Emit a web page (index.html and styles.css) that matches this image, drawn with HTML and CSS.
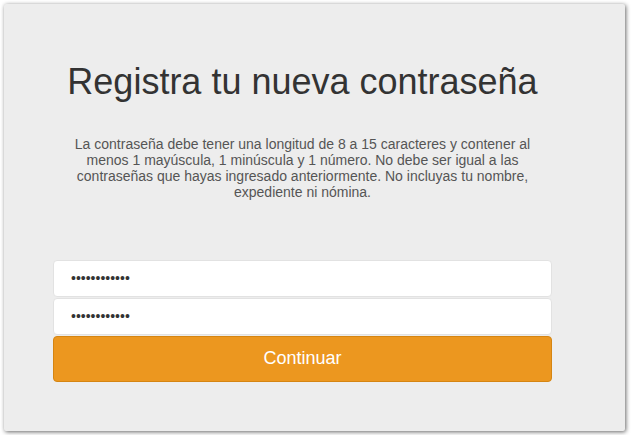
FILE: index.html
```html
<!DOCTYPE html>
<html lang="es">
<head>
<meta charset="utf-8">
<title>Registra tu nueva contraseña</title>
<link rel="stylesheet" href="styles.css">
</head>
<body>
<div class="card">
  <div class="content">
    <h1 class="title">Registra tu nueva contraseña</h1>
    <p class="info">La contraseña debe tener una longitud de 8 a 15 caracteres y contener al menos 1 mayúscula, 1 minúscula y 1 número. No debe ser igual a las contraseñas que hayas ingresado anteriormente. No incluyas tu nombre, expediente ni nómina.</p>
    <form class="form">
      <input class="field" type="password" value="Contrasena12">
      <input class="field" type="password" value="Contrasena12">
      <button class="btn" type="button">Continuar</button>
    </form>
  </div>
</div>
</body>
</html>
```
FILE: styles.css
```css
html, body {
  margin: 0;
  padding: 0;
  background: #ffffff;
}
body {
  padding: 4px;
  font-family: "Liberation Sans", Arial, sans-serif;
}
.card {
  width: 621px;
  height: 427px;
  box-sizing: border-box;
  background: #ededed;
  border-radius: 2px;
  box-shadow: 1px 1px 4px rgba(0, 0, 0, 0.6);
  padding: 58px 0 0 49px;
}
.content {
  width: 499px;
  display: flex;
  flex-direction: column;
  align-items: center;
}
.title {
  margin: 0;
  font-size: 36px;
  font-weight: 400;
  line-height: 1.1;
  color: #333333;
  text-align: center;
}
.info {
  margin: 34px 0 0;
  width: 470px;
  font-size: 14px;
  line-height: 16px;
  color: #555555;
  text-align: center;
}
.form {
  margin-top: 60px;
  width: 100%;
  display: flex;
  flex-direction: column;
  gap: 1px;
}
.field {
  box-sizing: border-box;
  width: 100%;
  height: 37px;
  margin: 0;
  padding: 0 17px;
  border: 1px solid #e2e2e2;
  border-radius: 4px;
  background: #ffffff;
  font-family: "Liberation Sans", Arial, sans-serif;
  font-size: 14px;
  color: #333333;
  outline: none;
}
.btn {
  box-sizing: border-box;
  width: 100%;
  height: 46px;
  margin: 0;
  border: 1px solid #d58512;
  border-radius: 4px;
  background: #ec971f;
  color: #ffffff;
  font-family: "Liberation Sans", Arial, sans-serif;
  font-size: 18px;
  cursor: pointer;
}
```
